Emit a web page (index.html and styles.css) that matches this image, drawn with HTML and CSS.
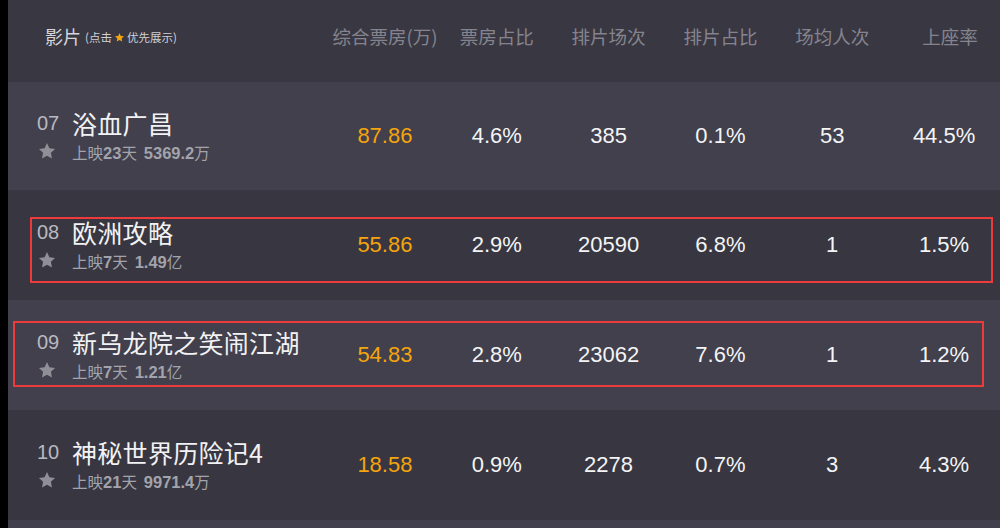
FILE: index.html
```html
<!DOCTYPE html>
<html lang="zh">
<head>
<meta charset="utf-8">
<title>票房</title>
<link rel="stylesheet" href="styles.css">
</head>
<body>
<div class="board">
  <div class="row head">
    <div class="film-head">影片 <span class="hint">(点击 <svg class="hstar" viewBox="0 0 24 24"><path d="M12 2.5l2.9 6.2 6.8.8-5 4.7 1.3 6.7L12 17.6l-6 3.3 1.3-6.7-5-4.7 6.8-.8z"/></svg> 优先展示)</span></div>
    <div class="cell">综合票房(万)</div>
    <div class="cell">票房占比</div>
    <div class="cell">排片场次</div>
    <div class="cell">排片占比</div>
    <div class="cell">场均人次</div>
    <div class="cell last">上座率</div>
  </div>

  <div class="row light first">
    <div class="film">
      <span class="rank">07</span><span class="name">浴血广昌</span>
      <svg class="star" viewBox="0 0 24 24"><path d="M12 2.5l2.9 6.2 6.8.8-5 4.7 1.3 6.7L12 17.6l-6 3.3 1.3-6.7-5-4.7 6.8-.8z"/></svg><span class="meta">上映<b>23</b>天&nbsp; <b>5369.2</b>万</span>
    </div>
    <div class="cell num gold">87.86</div>
    <div class="cell num">4.6%</div>
    <div class="cell num">385</div>
    <div class="cell num">0.1%</div>
    <div class="cell num">53</div>
    <div class="cell num">44.5%</div>
  </div>

  <div class="row dark">
    <div class="film">
      <span class="rank">08</span><span class="name">欧洲攻略</span>
      <svg class="star" viewBox="0 0 24 24"><path d="M12 2.5l2.9 6.2 6.8.8-5 4.7 1.3 6.7L12 17.6l-6 3.3 1.3-6.7-5-4.7 6.8-.8z"/></svg><span class="meta">上映<b>7</b>天&nbsp; <b>1.49</b>亿</span>
    </div>
    <div class="cell num gold">55.86</div>
    <div class="cell num">2.9%</div>
    <div class="cell num">20590</div>
    <div class="cell num">6.8%</div>
    <div class="cell num">1</div>
    <div class="cell num">1.5%</div>
    <div class="mark mark-a"></div>
  </div>

  <div class="row light">
    <div class="film">
      <span class="rank">09</span><span class="name">新乌龙院之笑闹江湖</span>
      <svg class="star" viewBox="0 0 24 24"><path d="M12 2.5l2.9 6.2 6.8.8-5 4.7 1.3 6.7L12 17.6l-6 3.3 1.3-6.7-5-4.7 6.8-.8z"/></svg><span class="meta">上映<b>7</b>天&nbsp; <b>1.21</b>亿</span>
    </div>
    <div class="cell num gold">54.83</div>
    <div class="cell num">2.8%</div>
    <div class="cell num">23062</div>
    <div class="cell num">7.6%</div>
    <div class="cell num">1</div>
    <div class="cell num">1.2%</div>
    <div class="mark mark-b"></div>
  </div>

  <div class="row dark">
    <div class="film">
      <span class="rank">10</span><span class="name">神秘世界历险记4</span>
      <svg class="star" viewBox="0 0 24 24"><path d="M12 2.5l2.9 6.2 6.8.8-5 4.7 1.3 6.7L12 17.6l-6 3.3 1.3-6.7-5-4.7 6.8-.8z"/></svg><span class="meta">上映<b>21</b>天&nbsp; <b>9971.4</b>万</span>
    </div>
    <div class="cell num gold">18.58</div>
    <div class="cell num">0.9%</div>
    <div class="cell num">2278</div>
    <div class="cell num">0.7%</div>
    <div class="cell num">3</div>
    <div class="cell num">4.3%</div>
  </div>
</div>
</body>
</html>
```

FILE: styles.css
```css
html, body {
  margin: 0;
  padding: 0;
  background: #000;
}

body {
  width: 1000px;
  height: 528px;
  overflow: hidden;
  font-family: "Liberation Sans", Arial, "Noto Sans CJK SC", sans-serif;
}

.board {
  margin-left: 8px;
  width: 992px;
  height: 528px;
  background: #41404c;
}

.row {
  position: relative;
  display: grid;
  grid-template-columns: 321px repeat(6, 1fr);
  align-items: center;
  height: 110px;
}

.head {
  height: 82px;
  background: #393842;
}

.row.first {
  height: 108px;
}

.light {
  background: #41404c;
}

.dark {
  background: #383741;
}

.film-head {
  padding-left: 37px;
  padding-bottom: 10px;
  font-family: "Noto Sans CJK SC", sans-serif;
  font-size: 18px;
  color: #d6d6dc;
  display: flex;
  align-items: center;
  gap: 4px;
}

.hint {
  font-size: 11.5px;
  color: #d0d0d6;
  display: inline-flex;
  align-items: center;
  gap: 2px;
  margin-top: 2px;
}

.hstar {
  width: 11px;
  height: 11px;
  fill: #f5a50e;
}

.head .cell {
  font-family: "Noto Sans CJK SC", sans-serif;
  font-size: 18.5px;
  font-weight: 400;
  color: #85848e;
  text-align: center;
  padding-bottom: 10px;
}

.head .cell.last {
  padding-left: 12px;
}

.film {
  display: grid;
  grid-template-columns: 35px auto;
  align-items: center;
  padding-left: 29px;
}

.rank {
  font-size: 20px;
  color: #b9b9c0;
  line-height: 30px;
}

.name {
  font-family: "Noto Sans CJK SC", sans-serif;
  font-size: 25px;
  letter-spacing: 0.3px;
  color: #f2f2f4;
  line-height: 30px;
}

.star {
  width: 20px;
  height: 20px;
  fill: #8f8f98;
  margin-left: 0;
  margin-top: 0;
}

.meta {
  font-family: "Noto Sans CJK SC", sans-serif;
  font-size: 15.5px;
  color: #a3a3ab;
  line-height: 24px;
  margin-top: 2px;
}

.meta b {
  font-family: "Liberation Sans", Arial, sans-serif;
  font-weight: bold;
  font-size: 16.5px;
}

.num {
  font-size: 22px;
  color: #f4f4f6;
  text-align: center;
}

.gold {
  color: #f5a40c;
}

.mark {
  position: absolute;
  border: 2px solid #ee3a3a;
  height: 62px;
}

.mark-a {
  left: 22px;
  top: 27px;
  width: 959px;
}

.mark-b {
  left: 5px;
  top: 21px;
  width: 967px;
}
```
